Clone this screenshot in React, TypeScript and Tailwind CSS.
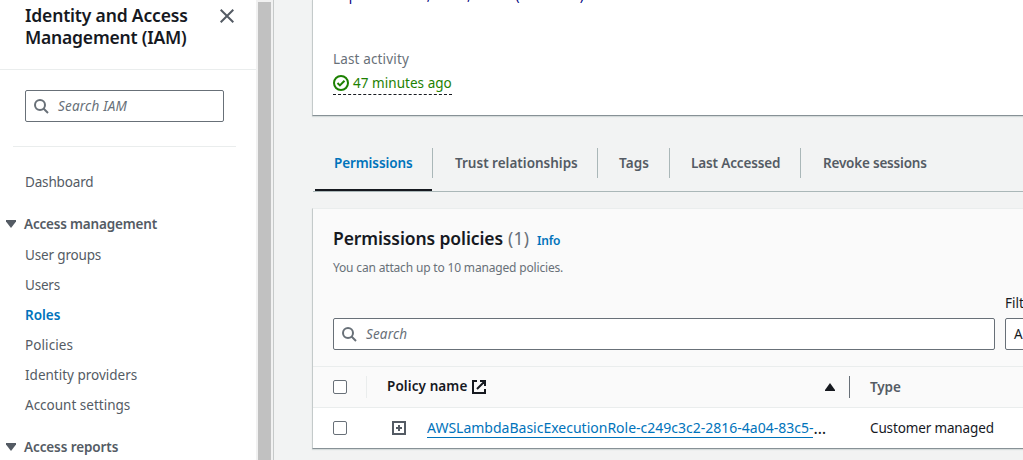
import React from "react";

const SearchIcon = () => (
  <svg width="16" height="16" viewBox="0 0 16 16" fill="none" stroke="#687078" strokeWidth="2" className="shrink-0">
    <circle cx="7" cy="7" r="5" />
    <path d="M15 15l-4.5-4.5" />
  </svg>
);

const Checkbox = () => <span className="block size-3.5 shrink-0 rounded-[2px] border border-[#687078] bg-white" />;

type Link = { label: string; track: string; active?: boolean };

const accessLinks: Link[] = [
  { label: "User groups", track: "tracking-[-0.16px]" },
  { label: "Users", track: "tracking-[-0.2px]" },
  { label: "Roles", track: "tracking-[0px]", active: true },
  { label: "Policies", track: "tracking-[0.1px]" },
  { label: "Identity providers", track: "tracking-[0px]" },
  { label: "Account settings", track: "tracking-[0px]" },
];

const tabs = [
  { label: "Permissions", box: "w-[120px] pl-[21px] text-[#0073bb]", track: "tracking-[-0.1px]" },
  { label: "Trust relationships", box: "w-[165px] pl-[22px]", track: "tracking-[0px]" },
  { label: "Tags", box: "w-[72px] pl-[21px]", track: "tracking-[0.1px]" },
  { label: "Last Accessed", box: "w-[131px] pl-[21px]", track: "tracking-[-0.13px]" },
  { label: "Revoke sessions", box: "w-[160px] pl-[22px]", track: "tracking-[-0.2px]" },
];

function SectionTitle({ label, track }: { label: string; track: string }) {
  return (
    <div className="flex h-5 items-center pl-1.5 font-semibold">
      <svg width="10" height="8" viewBox="0 0 10 8" fill="#545b64" className="mr-2 shrink-0">
        <path d="M0 0h10v1.5L5 8 0 1.5z" />
      </svg>
      <span className={track}>{label}</span>
    </div>
  );
}

function Sidebar() {
  return (
    <aside className="flex w-[274px] shrink-0 bg-white">
      <div className="w-64 text-[#545b64]">
        <header className="flex h-[70px] justify-between border-b border-[#eaeded] pt-1 pr-[22px] pl-[25px]">
          <h2 className="text-[17.5px] leading-[22px] font-semibold text-[#16191f]">
            <span className="block tracking-[-0.17px]">Identity and Access</span>
            <span className="block tracking-[-0.2px]">Management (IAM)</span>
          </h2>
          <svg width="14" height="14" viewBox="0 0 14 14" fill="none" stroke="#545b64" strokeWidth="2" className="mt-[5px] shrink-0">
            <path d="M0.7 0.7l12.6 12.6M13.3 0.7L0.7 13.3" />
          </svg>
        </header>
        <div className="mt-5 ml-[25px] flex h-8 w-[199px] items-center gap-[9px] rounded-[2px] border border-[#687078] px-[7px]">
          <SearchIcon />
          <span className="tracking-[0.2px] text-[#687078] italic">Search IAM</span>
        </div>
        <hr className="mt-6 ml-[13px] w-[223px] border-[#eaeded]" />
        <nav className="pt-[25px]">
          <a className="block h-5 pl-[25px] tracking-[-0.16px]">Dashboard</a>
          <div className="mt-[22px]">
            <SectionTitle label="Access management" track="tracking-[-0.18px]" />
          </div>
          <ul className="mt-[11px] mb-3 space-y-2.5 pl-[25px]">
            {accessLinks.map((l) => (
              <li key={l.label} className={l.active ? "h-5 font-semibold text-[#0073bb]" : "h-5"}>
                <span className={l.track}>{l.label}</span>
              </li>
            ))}
          </ul>
          <div className="mt-[22px]">
            <SectionTitle label="Access reports" track="tracking-[-0.1px]" />
          </div>
        </nav>
      </div>
      <div className="flex w-[17px] justify-center bg-[#f1f1f1] pt-0.5">
        <div className="w-[13px] bg-[#c1c1c1]" />
      </div>
      <div className="w-px bg-[#c6c9c9]" />
    </aside>
  );
}

function Summary() {
  return (
    <section className="h-[116px] overflow-hidden border-b border-l border-b-[#879196] border-l-[#c4caca] bg-white pl-5 shadow-[0_1px_1px_#d5dbdb]">
      <div className="-mt-[15px] h-5 tracking-[0.4px] text-[#000080]">September 10, 2024, 11:42 (UTC-5:00)</div>
      <div className="mt-[44px] h-5 tracking-[0.15px] text-[#687078]">Last activity</div>
      <div className="mt-1 flex h-[22px] w-[119px] items-center gap-1 border-b border-dashed border-[#16191f] pb-px text-[#1d8102]">
        <svg width="16" height="16" viewBox="0 0 16 16" fill="none" stroke="#1d8102" strokeWidth="2" className="shrink-0">
          <circle cx="8" cy="8" r="7" />
          <path d="M4.5 8l2.4 2.4L11.5 5.8" />
        </svg>
        <span className="tracking-[0.04px] whitespace-nowrap">47 minutes ago</span>
      </div>
    </section>
  );
}

function Tabs() {
  return (
    <div className="mt-8 ml-px flex h-11 border-b border-[#aab7b8] font-semibold text-[#545b64]">
      {tabs.map((t, i) => (
        <div key={t.label} className="flex flex-col">
          <div className={`flex h-[30px] items-center whitespace-nowrap ${t.box} ${i < tabs.length - 1 ? "border-r border-[#aab7b8]" : ""}`}>
            <span className={t.track}>{t.label}</span>
          </div>
          {i === 0 && <div className="mt-[11px] ml-0.5 h-0.5 w-[117px] bg-[#16191f]" />}
        </div>
      ))}
    </div>
  );
}

function Policies() {
  return (
    <section className="mt-4 border border-r-0 border-t-[#eaeded] border-b-[#879196] border-l-[#c4caca] bg-[#fafafa] shadow-[0_1px_1px_#d5dbdb]">
      <div className="h-[157px] pt-[17px] pl-5">
        <div className="flex h-6 items-center leading-6">
          <h2 className="w-[170px] text-[17.5px] font-semibold tracking-[-0.1px] whitespace-nowrap text-[#16191f]">Permissions policies</h2>
          <span className="ml-[5px] w-[22px] text-[17.5px] tracking-[0.2px] text-[#687078]">(1)</span>
          <a className="mt-[5px] ml-[7px] text-xs font-semibold tracking-[-0.2px] text-[#0073bb]">Info</a>
        </div>
        <p className="mt-2 h-5 text-xs leading-5 tracking-[-0.17px] text-[#687078]">You can attach up to 10 managed policies.</p>
        <div className="mt-[15px] ml-[672px] h-5 whitespace-nowrap text-[#16191f]">Filter by Type</div>
        <div className="mt-[5px] flex gap-2.5">
          <div className="flex h-8 w-[662px] shrink-0 items-center gap-[9px] rounded-[2px] border border-[#687078] bg-white px-[7px]">
            <SearchIcon />
            <span className="tracking-[0.15px] text-[#687078] italic">Search</span>
          </div>
          <div className="flex h-8 w-[180px] shrink-0 items-center rounded-[2px] border border-[#687078] bg-white pl-2 text-[#16191f]">All types</div>
        </div>
      </div>
      <div className="flex h-[41px] items-center border-t border-[#eaeded] pl-5 font-semibold">
        <Checkbox />
        <div className="ml-[19px] h-[22px] w-px bg-[#eaeded]" />
        <span className="-mt-0.5 ml-5 w-[85px] shrink-0 tracking-[0.1px] whitespace-nowrap text-[#16191f]">Policy name</span>
        <svg width="14" height="14" viewBox="0 0 14 14" fill="none" stroke="#16191f" strokeWidth="2" className="shrink-0">
          <path d="M5 1H1v12h12V9M8 1h5v5M13 1L5 9" />
        </svg>
        <svg width="10" height="8" viewBox="0 0 10 8" fill="#16191f" className="ml-[339px] shrink-0">
          <path d="M5 0l5 7v1H0V7z" />
        </svg>
        <div className="ml-3.5 h-[22px] w-px bg-[#687078]" />
        <span className="ml-5 tracking-[-0.1px] text-[#545b64]">Type</span>
      </div>
      <div className="flex h-[41px] items-center border-t border-[#eaeded] bg-white pl-5">
        <Checkbox />
        <svg width="14" height="14" viewBox="0 0 14 14" fill="none" stroke="#545b64" strokeWidth="2" className="ml-[45px] shrink-0">
          <path d="M1 1h12v12H1zM4 7h6M7 4v6" />
        </svg>
        <div className="ml-[21px] flex w-[443px] whitespace-nowrap text-[#16191f]">
          <a className="h-5 border-b border-[#0073bb] text-[14px] text-[#0073bb]">AWSLambdaBasicExecutionRole-c249c3c2-2816-4a04-83c5-</a>
          <span className="text-[16px]">…</span>
        </div>
        <span className="tracking-[-0.14px] whitespace-nowrap text-[#16191f]">Customer managed</span>
      </div>
    </section>
  );
}

export default function App() {
  return (
    <div className="flex h-[460px] w-[1023px] overflow-hidden bg-[#f2f3f3] font-['Noto_Sans',sans-serif] text-[13.5px] leading-5">
      <Sidebar />
      <main className="w-0 grow pl-[38px]">
        <Summary />
        <Tabs />
        <Policies />
      </main>
    </div>
  );
}
